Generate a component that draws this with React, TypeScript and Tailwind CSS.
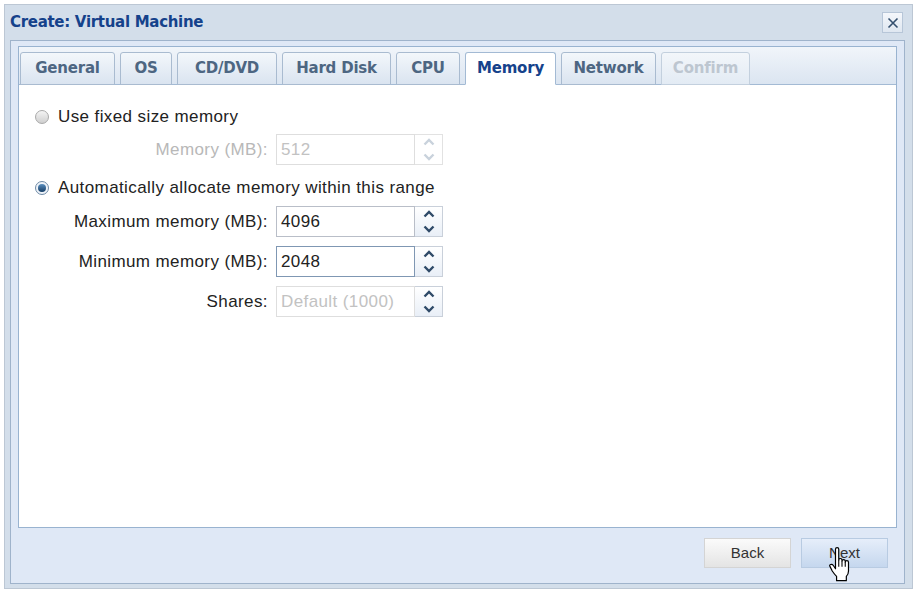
import React from 'react';

const TABS = [
    {label: 'General', w: 'w-[95px]'},
    {label: 'OS', w: 'w-[52px]'},
    {label: 'CD/DVD', w: 'w-[100px]'},
    {label: 'Hard Disk', w: 'w-[109px]'},
    {label: 'CPU', w: 'w-[64px]'},
    {label: 'Memory', w: 'w-[91px]', active: true},
    {label: 'Network', w: 'w-[95px]'},
    {label: 'Confirm', w: 'w-[89px]', disabled: true},
];

function Radio({checked}: { checked?: boolean }) {
    return (
        <span
            className={`w-[14px] h-[14px] rounded-full border flex items-center justify-center ${
                checked ? 'border-[#6f8aa6] bg-[#eef3f9]' : 'border-[#a9a9a9] bg-gradient-to-b from-[#f4f4f4] to-[#cfcfcf]'
            }`}
        >
            {checked && <span className="w-[8px] h-[8px] rounded-full bg-gradient-to-b from-[#5a8fbf] to-[#163e66]"/>}
        </span>
    );
}

function Spinner({disabled}: { disabled?: boolean }) {
    const c = disabled ? '#c9d2dc' : '#2f4a68';
    return (
        <div className={`w-[28px] h-full border border-l-0 flex flex-col ${
            disabled ? 'border-[#e2e2e2] bg-white' : 'border-[#c9d0da] bg-gradient-to-b from-white to-[#e9eff7]'
        }`}>
            <div className="flex-1 flex items-center justify-center">
                <svg width="12" height="8" viewBox="0 0 12 8">
                    <path d="M1.5 6.5 L6 2 L10.5 6.5" fill="none" stroke={c} strokeWidth="2.4"/>
                </svg>
            </div>
            <div className="flex-1 flex items-center justify-center">
                <svg width="12" height="8" viewBox="0 0 12 8">
                    <path d="M1.5 1.5 L6 6 L10.5 1.5" fill="none" stroke={c} strokeWidth="2.4"/>
                </svg>
            </div>
        </div>
    );
}

function Field({label, value, labelOff, disabled, focused, spinOff, mt}: {
    label: string, value: string, labelOff?: boolean, disabled?: boolean, focused?: boolean, spinOff?: boolean, mt: string
}) {
    return (
        <div className={`flex items-center h-[31px] ${mt}`}>
            <span className={`w-[233px] text-right text-[17px] tracking-[0.4px] ${
                labelOff ? 'text-[#b8b8b8]' : 'text-[#222]'
            }`}>{label}</span>
            <div className="ml-[8px] flex h-full">
                <div className={`w-[139px] h-full border flex items-center pl-[4px] text-[17px] tracking-[0.4px] ${
                    disabled ? 'border-[#dedede] text-[#c2c2c2]' : focused ? 'border-[#7f97b3] text-[#222]' : 'border-[#b9bec8] text-[#222]'
                }`}>
                    {value}
                </div>
                <Spinner disabled={spinOff}/>
            </div>
        </div>
    );
}

function HandCursor() {
    return (
        <svg className="absolute left-[829px] top-[547px]" width="26" height="36" viewBox="0 0 24 33">
            <path
                d="M6 2 Q6 0.5 7.5 0.5 Q9 0.5 9 2 L9 12 Q9 10.5 10.5 10.5 Q12 10.5 12 12 L12 13 Q12 11.5 13.5 11.5 Q15 11.5 15 13 L15 14 Q15 12.5 16.5 12.5 Q18 12.5 18 14 L18 22 Q18 25 16 27 L16 31 L7 31 L7 27 Q5 25 3 22 L1 18 Q0 16.5 1.5 16 Q3 15.5 4 17 L6 20 Z"
                fill="white" stroke="black" strokeWidth="1.1" strokeLinejoin="round"/>
            <path d="M9 12 L9 18 M12 13 L12 18 M15 14 L15 18" stroke="black" strokeWidth="1"/>
        </svg>
    );
}

export default function App() {
    return (
        <div className="relative w-[920px] h-[595px] bg-white pt-[4px] pl-[4px] font-['Liberation_Sans',Arial,sans-serif]">
            <div className="w-[909px] h-[585px] border border-[#bcc7d4] bg-[#d3deea] flex flex-col">
                {/* Title bar */}
                <div className="h-[35px] shrink-0 flex items-center justify-between pl-[5px] pr-[9px]">
                    <span className="font-['DejaVu_Sans',sans-serif] text-[15px] font-bold text-[#15428b] tracking-[-0.3px]">Create: Virtual Machine</span>
                    <button className="w-[21px] h-[21px] border border-[#b7c6d8] bg-gradient-to-b from-[#f4f7fb] to-[#dfe7f1] flex items-center justify-center">
                        <svg width="12" height="12" viewBox="0 0 12 12">
                            <path d="M1.5 1.5 L10.5 10.5 M10.5 1.5 L1.5 10.5" stroke="#34506f" strokeWidth="1.6"/>
                        </svg>
                    </button>
                </div>

                {/* Frame */}
                <div className="flex-1 ml-[5px] mr-[7px] mb-[4px] border border-[#9fb3cb] bg-[#dfe8f6] flex flex-col px-[7px] pt-[5px]">
                    <div className="h-[482px] border border-[#99b3d0] flex flex-col">
                        {/* Tab strip */}
                        <div className="h-[38px] shrink-0 flex items-end gap-[5px] pl-[1px] bg-gradient-to-b from-[#f1f5fa] to-[#dbe5f1] border-b border-[#a3bad4]">
                            {TABS.map((t) => (
                                <div
                                    key={t.label}
                                    className={`${t.w} h-[33px] -mb-[1px] rounded-t-[3px] border flex items-center justify-center font-['DejaVu_Sans',sans-serif] text-[15px] font-bold tracking-[-0.2px] ${
                                        t.active
                                            ? 'bg-white border-[#a3bad4] border-b-white text-[#15428b]'
                                            : t.disabled
                                                ? 'bg-gradient-to-b from-[#f2f6fa] to-[#e3ebf4] border-[#c3d0de] text-[#bdc6d0]'
                                                : 'bg-gradient-to-b from-[#f3f7fb] to-[#dae4f0] border-[#a9bbd0] text-[#4d6682]'
                                    }`}
                                >
                                    {t.label}
                                </div>
                            ))}
                        </div>

                        {/* Content */}
                        <div className="flex-1 bg-white flex flex-col pl-[16px] pt-[22px]">
                            <div className="flex items-center h-[20px] gap-[9px]">
                                <Radio/>
                                <span className="text-[17px] tracking-[0.4px] text-[#222]">Use fixed size memory</span>
                            </div>
                            <Field label="Memory (MB):" value="512" labelOff disabled spinOff mt="mt-[7px]"/>
                            <div className="flex items-center h-[20px] gap-[9px] mt-[13px]">
                                <Radio checked/>
                                <span className="text-[17px] tracking-[0.4px] text-[#222]">Automatically allocate memory within this range</span>
                            </div>
                            <Field label="Maximum memory (MB):" value="4096" mt="mt-[8px]"/>
                            <Field label="Minimum memory (MB):" value="2048" focused mt="mt-[9px]"/>
                            <Field label="Shares:" value="Default (1000)" disabled mt="mt-[9px]"/>
                        </div>
                    </div>

                    {/* Buttons */}
                    <div className="flex justify-end gap-[10px] pt-[10px] pr-[9px]">
                        <button className="w-[87px] h-[30px] border border-[#d4d4d4] bg-gradient-to-b from-[#fbfbfb] to-[#e4e4e4] text-[15px] text-[#333]">
                            Back
                        </button>
                        <button className="w-[87px] h-[30px] border border-[#b8cbe2] bg-gradient-to-b from-[#e6eefa] to-[#c5d7ee] text-[15px] text-[#333]">
                            Next
                        </button>
                    </div>
                </div>
            </div>
            <HandCursor/>
        </div>
    );
}
